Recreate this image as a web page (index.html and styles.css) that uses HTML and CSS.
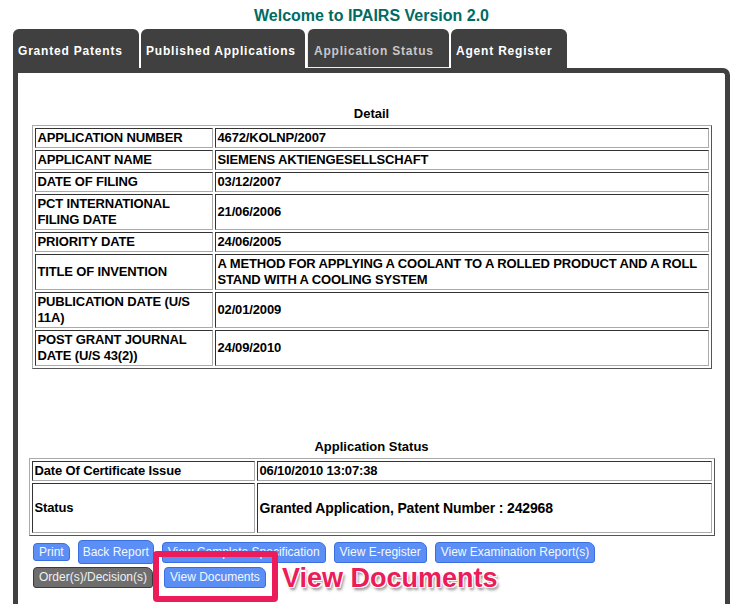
FILE: index.html
```html
<!DOCTYPE html>
<html lang="en">
<head>
  <meta charset="UTF-8">
  <title>IPAIRS - Application Status</title>
  <link rel="stylesheet" href="styles.css">
</head>
<body>

  <div class="page">
    <h1 class="site-title">Welcome to IPAIRS Version 2.0</h1>

    <ul class="tabs">
      <li class="tab tab-granted">Granted Patents</li>
      <li class="tab tab-published">Published Applications</li>
      <li class="tab tab-status active">Application Status</li>
      <li class="tab tab-agent">Agent Register</li>
    </ul>

    <div class="panel">
      <div class="section-title">Detail</div>
      <table class="grid detail">
        <tr><td class="label">APPLICATION NUMBER</td><td>4672/KOLNP/2007</td></tr>
        <tr><td class="label">APPLICANT NAME</td><td>SIEMENS AKTIENGESELLSCHAFT</td></tr>
        <tr><td class="label">DATE OF FILING</td><td>03/12/2007</td></tr>
        <tr><td class="label">PCT INTERNATIONAL FILING DATE</td><td>21/06/2006</td></tr>
        <tr><td class="label">PRIORITY DATE</td><td>24/06/2005</td></tr>
        <tr><td class="label">TITLE OF INVENTION</td><td>A METHOD FOR APPLYING A COOLANT TO A ROLLED PRODUCT AND A ROLL STAND WITH A COOLING SYSTEM</td></tr>
        <tr><td class="label">PUBLICATION DATE (U/S 11A)</td><td>02/01/2009</td></tr>
        <tr><td class="label">POST GRANT JOURNAL DATE (U/S 43(2))</td><td>24/09/2010</td></tr>
      </table>

      <div class="section-title status-title">Application Status</div>
      <table class="grid status">
        <tr><td class="label">Date Of Certificate Issue</td><td>06/10/2010 13:07:38</td></tr>
        <tr class="status-row"><td class="label">Status</td><td class="status-value">Granted Application, Patent Number : 242968</td></tr>
      </table>

      <div class="actions">
        <div class="btn-row">
          <span class="btn btn-short">Print</span>
          <span class="btn btn-tall">Back Report</span>
          <span class="btn">View Complete Specification</span>
          <span class="btn">View E-register</span>
          <span class="btn">View Examination Report(s)</span>
        </div>
        <div class="btn-row">
          <span class="btn btn-gray">Order(s)/Decision(s)</span>
          <span class="btn">View Documents</span>
        </div>
        <div class="callout-box"></div>
        <div class="callout-label">View Documents</div>
      </div>
    </div>
  </div>

</body>
</html>
```

FILE: styles.css
```css
body {
  margin: 0;
  background-color: #fff;
  font-family: 'Liberation Sans', Arial, sans-serif;
  color: #000;
}
.page {
  width: 717px;
  padding-left: 13px;
}
.site-title {
  margin: 0;
  padding-top: 6px;
  height: 23px;
  font-size: 16px;
  line-height: 20px;
  text-align: center;
  color: #006b63;
}
.tabs {
  display: flex;
  gap: 2px;
  list-style: none;
  margin: 0;
  padding: 0;
  height: 39px;
}
.tab {
  box-sizing: border-box;
  height: 39px;
  padding: 15px 0 0 5px;
  background-color: #404040;
  color: #fff;
  font-size: 12px;
  font-weight: bold;
  letter-spacing: 0.8px;
  border-radius: 6px 6px 0 0;
  white-space: nowrap;
}
.tab-granted { width: 126px; }
.tab-published { width: 164px; }
.tab-status { width: 142px; }
.tab-agent { width: 116px; }
.tab.active {
  color: #c8c8c8;
  padding-left: 6px;
  border-left: 1px solid #eee;
  border-bottom: 1px solid #eee;
}
.panel {
  border: 5px solid #404040;
  border-bottom: none;
  border-top-right-radius: 7px;
  padding: 33px 0 30px;
}
.section-title {
  font-size: 13px;
  font-weight: bold;
  line-height: 16px;
  text-align: center;
}
.status-title {
  margin-top: 70px;
}
.grid {
  margin: 3px auto 0;
  border-collapse: separate;
  border-spacing: 2px;
  border: 1px solid;
  border-color: #aaa #555 #555 #aaa;
}
.grid td {
  border: 1px solid;
  border-color: #333 #aaa #aaa #333;
  padding: 1px 2px;
  font-size: 13px;
  font-weight: bold;
  line-height: 16px;
  letter-spacing: -0.15px;
  vertical-align: middle;
}
.detail {
  width: 680px;
}
.detail td.label {
  width: 172px;
}
.status {
  width: 686px;
}
.status td.label {
  width: 217px;
}
.status-row td {
  height: 46px;
}
.status-value {
  font-size: 14px !important;
}
.actions {
  position: relative;
  padding: 4px 0 0 15px;
}
.btn-row {
  display: flex;
  align-items: center;
  gap: 8px;
  height: 24px;
}
.btn-row + .btn-row {
  margin-top: 3px;
  height: 21px;
}
.btn {
  box-sizing: border-box;
  height: 21px;
  padding: 0 5px;
  line-height: 19px;
  font-size: 12px;
  color: #f4f8ff;
  background-color: #5b8ff5;
  border: 1px solid #3b6fe0;
  border-radius: 4px 7px 3px 3px;
  white-space: nowrap;
}
.btn-short {
  height: 18px;
  line-height: 16px;
}
.btn-tall {
  height: 24px;
  line-height: 22px;
  padding: 0 4px;
}
.btn-gray {
  background-color: #6e6e6e;
  border-color: #3a3a3a;
  color: #f0f0f0;
  margin-right: 3px;
}
.callout-box {
  position: absolute;
  left: 135px;
  top: 15px;
  width: 125px;
  height: 51px;
  box-sizing: border-box;
  border: 6px solid #ec1c5b;
  border-radius: 4px;
}
.callout-label {
  position: absolute;
  left: 264px;
  top: 27px;
  font-size: 27px;
  line-height: 30px;
  font-weight: bold;
  color: #ec1c5b;
  white-space: nowrap;
  text-shadow: -1px -1px 0 #fff, 1px -1px 0 #fff, -1px 1px 0 #fff, 1px 1px 0 #fff, 2px 3px 3px rgba(0, 0, 0, 0.45);
}
```
